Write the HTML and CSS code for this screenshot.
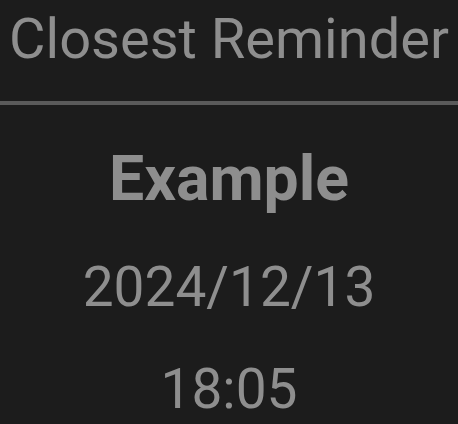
FILE: index.html
```html
<!DOCTYPE html>
<html>
<head>
<meta charset="utf-8">
<link rel="stylesheet" href="styles.css">
</head>
<body>
<div class="screen">
  <div class="title">Closest Reminder</div>
  <div class="divider"></div>
  <div class="name">Example</div>
  <div class="date">2024/12/13</div>
  <div class="time">18:05</div>
</div>
</body>
</html>
```

FILE: styles.css
```css
html, body {
  margin: 0;
  padding: 0;
  background: #1c1c1c;
}
.screen {
  width: 458px;
  height: 424px;
  overflow: hidden;
  display: flex;
  flex-direction: column;
  align-items: center;
  font-family: Roboto, "Noto Sans", sans-serif;
  color: #8e8e8e;
}
.title {
  margin-top: 6px;
  font-size: 56px;
  line-height: 66px;
  white-space: nowrap;
}
.divider {
  align-self: stretch;
  height: 4px;
  margin-top: 29px;
  background: #5a5a5a;
}
.name {
  margin-top: 37px;
  font-size: 62.5px;
  line-height: 73px;
  font-weight: 700;
}
.date {
  margin-top: 40px;
  font-size: 55px;
  line-height: 65px;
}
.time {
  margin-top: 37px;
  font-size: 55px;
  line-height: 65px;
}
```
